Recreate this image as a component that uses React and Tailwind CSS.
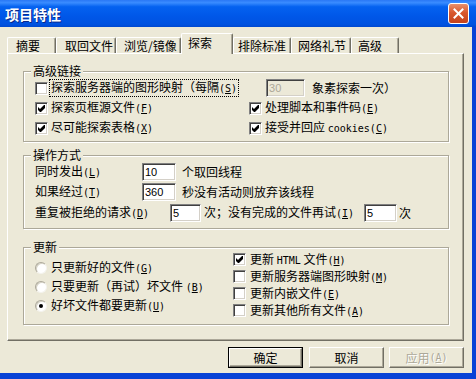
const sunk =
  "border border-t-[#808080] border-l-[#808080] border-b-white border-r-white shadow-[inset_1px_1px_0_#404040,inset_-1px_-1px_0_#d4d0c8]";

const mono = "[font-family:'DejaVu_Sans_Mono',monospace] text-[10px]";

const Key = ({ k }) => (
  <span className={mono}>
    (<span className="underline">{k}</span>)
  </span>
);

const Check = ({ on }) => (
  <span className={`w-[13px] h-[13px] shrink-0 bg-white flex items-center justify-center ${sunk}`}>
    {on && (
      <svg width="7" height="7" viewBox="0 0 7 7">
        <polygon points="0,2 2,4 6,0 7,0 7,3 3,7 2,7 0,5" fill="#000" />
      </svg>
    )}
  </span>
);

const Radio = ({ on }) => (
  <span className="w-[12px] h-[12px] shrink-0 rounded-full bg-white flex items-center justify-center border border-t-[#aca899] border-l-[#aca899] border-b-[#f4f3ee] border-r-[#f4f3ee] shadow-[inset_1px_1px_0_#d6d3c6]">
    {on && <span className="w-[4px] h-[4px] rounded-full bg-black" />}
  </span>
);

const Field = ({ value, w, off }) => (
  <div
    className={`${w} h-[18px] flex items-center pl-[2px] [font-family:'Liberation_Sans',sans-serif] text-[11px] ${sunk} ${
      off ? "bg-[#ece9d8] text-[#aca899]" : "bg-white text-black"
    }`}
  >
    {value}
  </div>
);

const Group = ({ title, className, children }) => (
  <div
    className={`relative ml-[15px] w-[426px] border border-[#aca899] shadow-[inset_1px_1px_0_#fff,1px_1px_0_#fff] ${className}`}
  >
    <span className="absolute left-[7px] -top-[7px] px-[2px] bg-[#ece9d8] leading-[12px]">{title}</span>
    {children}
  </div>
);

const tabs = [
  { t: "摘要", w: "w-[49px]", pl: "pl-[8px]" },
  { t: "取回文件", w: "w-[60px]", pl: "pl-[8px]" },
  { t: "浏览/镜像", w: "w-[65px]", pl: "pl-[7px]" },
  { t: "探索", w: "w-[52px]", pl: "pl-[6px]", on: true },
  { t: "排除标准", w: "w-[58px]", pl: "pl-[4px]" },
  { t: "网络礼节", w: "w-[60px]", pl: "pl-[6px]" },
  { t: "高级", w: "w-[48px]", pl: "pl-[6px]" },
];

const raised =
  "border border-t-white border-l-white border-b-[#716f64] border-r-[#716f64] shadow-[inset_-1px_-1px_0_#aca899]";

export default function App() {
  return (
    <div className="w-[476px] h-[379px] bg-[#0842d6] flex flex-col [font-family:'Noto_Sans_CJK_SC',sans-serif] text-[12px] leading-[14px] text-black overflow-hidden">
      {/* title bar */}
      <div className="h-[27px] shrink-0 flex items-center justify-between pl-[5px] pr-[7px] bg-[linear-gradient(to_bottom,#2a78f5_0%,#3a8cff_10%,#0462f0_25%,#0057e8_60%,#0052e0_90%,#0049d0_100%)]">
        <span className="text-white font-bold text-[14px] leading-[16px] [text-shadow:1px_1px_0_#0c2a8a]">项目特性</span>
        <div className="w-[21px] h-[21px] rounded-[3px] border border-white flex items-center justify-center bg-[linear-gradient(to_bottom,#e9906c,#d9572d_45%,#c4421b)]">
          <svg width="11" height="11" viewBox="0 0 11 11">
            <path d="M1.5 1.5 L9.5 9.5 M9.5 1.5 L1.5 9.5" stroke="#fff" strokeWidth="2" strokeLinecap="square" />
          </svg>
        </div>
      </div>

      {/* body */}
      <div className="w-[472px] h-[346px] bg-[#ece9d8] pl-[7px] pt-[6px]">
        <div className="h-[20px] flex items-end">
          {tabs.map((tab) =>
            tab.on ? (
              <div
                key={tab.t}
                className={`${tab.w} ${tab.pl} h-[21px] -mb-px relative z-10 bg-[#ece9d8] pt-[2px] rounded-t-[2px] border-t border-l border-white border-r border-r-[#716f64] shadow-[inset_-1px_0_0_#aca899]`}
              >
                {tab.t}
              </div>
            ) : (
              <div
                key={tab.t}
                className={`${tab.w} ${tab.pl} h-[16px] pt-[1px] rounded-t-[2px] border-t border-l border-white border-r border-r-[#716f64] shadow-[inset_-1px_0_0_#aca899]`}
              >
                {tab.t}
              </div>
            )
          )}
        </div>

        <div className="w-[457px] h-[288px] border border-t-white border-l-white border-r-[#716f64] border-b-[#716f64] shadow-[inset_-1px_-1px_0_#aca899]">
          <Group title="高级链接" className="mt-[17px] h-[71px] pt-[6px]">
            <div className="h-[20px] flex items-center pl-[11px]">
              <Check />
              <span className="ml-[1px] border border-dotted border-black px-[1px]">
                探索服务器端的图形映射（每隔<Key k="S" />
              </span>
              <div className="ml-[27px]">
                <Field value="30" w="w-[39px]" off />
              </div>
              <span className="ml-[7px]">象素探索一次）</span>
            </div>
            <div className="h-[20px] flex items-center pl-[11px]">
              <div className="w-[214px] flex items-center">
                <Check on />
                <span className="ml-[3px]">
                  探索页框源文件<Key k="F" />
                </span>
              </div>
              <Check on />
              <span className="ml-[3px]">
                处理脚本和事件码<Key k="E" />
              </span>
            </div>
            <div className="h-[20px] flex items-center pl-[11px]">
              <div className="w-[214px] flex items-center">
                <Check on />
                <span className="ml-[3px]">
                  尽可能探索表格<Key k="X" />
                </span>
              </div>
              <Check on />
              <span className="ml-[3px]">
                接受并回应 <span className={mono}>cookies</span>
                <Key k="C" />
              </span>
            </div>
          </Group>

          <Group title="操作方式" className="mt-[13px] h-[74px] pt-[6px]">
            <div className="h-[20px] flex items-center pl-[11px]">
              <span className="w-[107px]">
                同时发出<Key k="L" />
              </span>
              <Field value="10" w="w-[34px]" />
              <span className="ml-[6px]">个取回线程</span>
            </div>
            <div className="h-[20px] flex items-center pl-[11px]">
              <span className="w-[107px]">
                如果经过<Key k="T" />
              </span>
              <Field value="360" w="w-[34px]" />
              <span className="ml-[6px]">秒没有活动则放弃该线程</span>
            </div>
            <div className="h-[20px] mt-px flex items-center pl-[11px]">
              <span className="w-[135px]">
                重复被拒绝的请求<Key k="D" />
              </span>
              <Field value="5" w="w-[31px]" />
              <span className="ml-[3px]">
                次；没有完成的文件再试<Key k="I" />
              </span>
              <div className="ml-[10px]">
                <Field value="5" w="w-[33px]" />
              </div>
              <span className="ml-[2px]">次</span>
            </div>
          </Group>

          <Group title="更新" className="mt-[18px] h-[78px] flex pl-[11px]">
            <div className="w-[198px] pt-[10px]">
              <div className="h-[19px] flex items-center">
                <Radio />
                <span className="ml-[4px]">
                  只更新好的文件<Key k="G" />
                </span>
              </div>
              <div className="h-[19px] flex items-center">
                <Radio />
                <span className="ml-[4px]">
                  只要更新（再试）坏文件 <Key k="B" />
                </span>
              </div>
              <div className="h-[19px] flex items-center">
                <Radio on />
                <span className="ml-[4px]">
                  好坏文件都要更新<Key k="U" />
                </span>
              </div>
            </div>
            <div className="pt-[3px]">
              <div className="h-[17px] flex items-center">
                <Check on />
                <span className="ml-[4px]">
                  更新 <span className={mono}>HTML</span> 文件
                  <Key k="H" />
                </span>
              </div>
              <div className="h-[17px] flex items-center">
                <Check />
                <span className="ml-[4px]">
                  更新服务器端图形映射<Key k="M" />
                </span>
              </div>
              <div className="h-[17px] flex items-center">
                <Check />
                <span className="ml-[4px]">
                  更新内嵌文件<Key k="E" />
                </span>
              </div>
              <div className="h-[17px] flex items-center">
                <Check />
                <span className="ml-[4px]">
                  更新其他所有文件<Key k="A" />
                </span>
              </div>
            </div>
          </Group>
        </div>

        {/* buttons */}
        <div className="mt-[6px] flex pl-[221px]">
          <div className="w-[75px] h-[21px] border border-black">
            <div className={`w-full h-full flex items-center justify-center ${raised}`}>确定</div>
          </div>
          <div className={`ml-[6px] w-[75px] h-[21px] flex items-center justify-center ${raised}`}>取消</div>
          <div
            className={`ml-[5px] w-[75px] h-[21px] flex items-center justify-center text-[#aca899] [text-shadow:1px_1px_0_#fff] ${raised}`}
          >
            应用<Key k="A" />
          </div>
        </div>
      </div>
    </div>
  );
}
